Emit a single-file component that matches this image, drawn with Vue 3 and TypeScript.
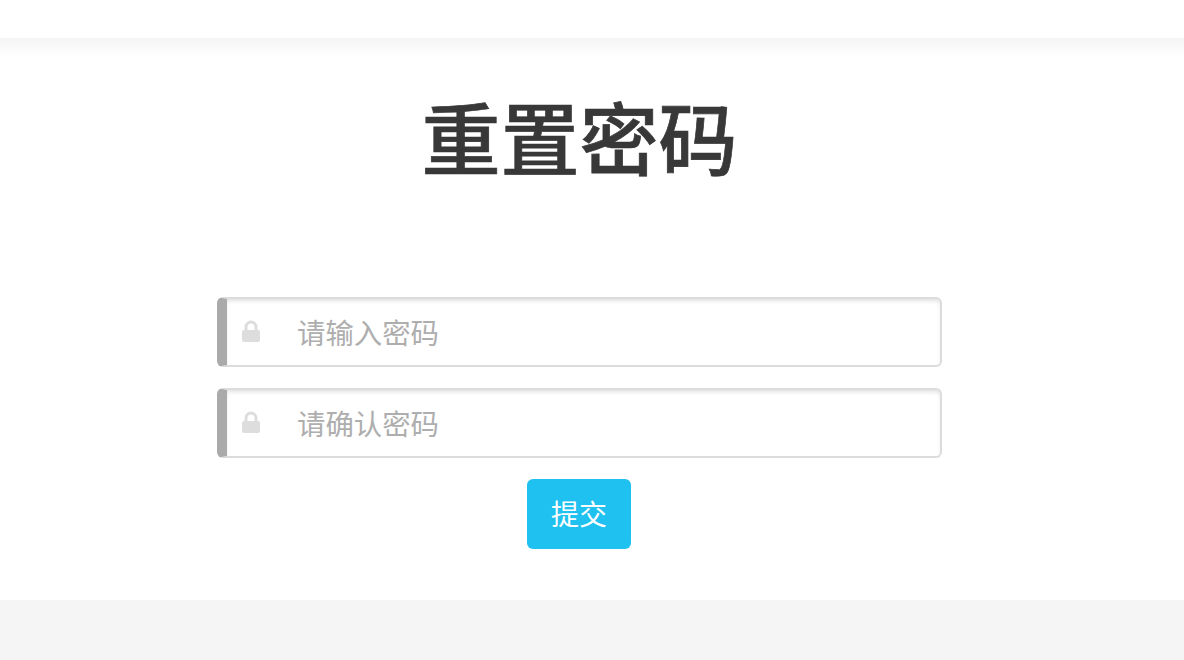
<template>
  <div class="page">
    <header class="top-bar"></header>
    <main class="content">
      <h1 class="title">重置密码</h1>
      <form class="reset-form" @submit.prevent>
        <label v-for="field in fields" :key="field.key" class="field">
          <span class="field-icon">
            <svg width="20" height="24" viewBox="0 0 20 24" aria-hidden="true">
              <path d="M5 11V7a5 5 0 0 1 10 0v4" fill="none" stroke="#dddddd" stroke-width="3" />
              <rect x="1" y="10" width="18" height="12" rx="2" fill="#dddddd" />
            </svg>
          </span>
          <input v-model="field.value" type="password" :placeholder="field.placeholder" />
        </label>
        <button class="submit" type="submit">提交</button>
      </form>
    </main>
    <footer class="bottom-bar"></footer>
  </div>
</template>

<script setup lang="ts">
import { reactive } from "vue";

interface PasswordField {
  key: string;
  placeholder: string;
  value: string;
}

const fields = reactive<PasswordField[]>([
  { key: "password", placeholder: "请输入密码", value: "" },
  { key: "confirm", placeholder: "请确认密码", value: "" }
]);
</script>

<style>
html, body { margin: 0; background: #ffffff; overflow: hidden; }
</style>

<style scoped>
.page {
  height: 660px;
  display: flex;
  flex-direction: column;
  font-family: "Noto Sans CJK SC", "Liberation Sans", sans-serif;
}
.top-bar { height: 38px; background: #ffffff; flex: none; }
.content {
  flex: none;
  height: 562px;
  box-sizing: border-box;
  padding: 59px 25px 0 0;
  background: linear-gradient(#f5f5f5, #fefefe 16px, #ffffff 30px);
}
.title {
  margin: 0;
  height: 77px;
  line-height: 77px;
  text-align: center;
  font-size: 79px;
  font-weight: 500;
  -webkit-text-stroke: 0.7px #383838;
  color: #383838;
}
.reset-form {
  width: 725px;
  margin: 123px auto 0;
  display: flex;
  flex-direction: column;
  align-items: center;
  gap: 21px;
}
.field {
  width: 100%;
  height: 70px;
  box-sizing: border-box;
  display: flex;
  align-items: center;
  border: 2px solid #dcdcdc;
  border-left: 10px solid #aaaaaa;
  border-radius: 6px;
  background: #ffffff;
  box-shadow: inset 0 3px 4px -1px rgba(0, 0, 0, 0.12);
}
.field-icon { width: 70px; flex: none; display: flex; padding-left: 14px; box-sizing: border-box; }
.field-icon svg { margin-top: -1px; }
input {
  flex: 1;
  min-width: 0;
  height: 100%;
  padding: 0 0 2px;
  box-sizing: border-box;
  border: 0;
  outline: none;
  background: transparent;
  font-family: inherit;
  font-size: 28.4px;
  color: #333333;
}
input::placeholder { color: #aeaeae; opacity: 1; }
.submit {
  width: 104px;
  height: 70px;
  margin-right: 1px;
  padding: 0 0 2px;
  border: 0;
  border-radius: 6px;
  background: #1fc1f0;
  color: #ffffff;
  font-family: inherit;
  font-size: 28px;
}
.bottom-bar { flex: 1; background: #f5f5f5; }
</style>
